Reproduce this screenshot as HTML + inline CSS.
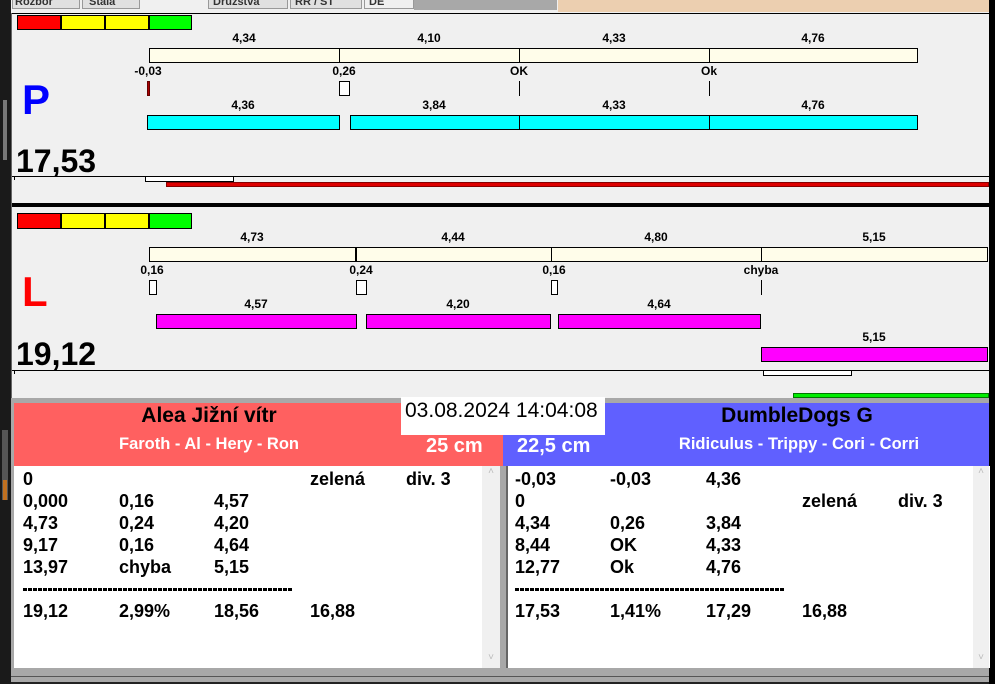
<!DOCTYPE html>
<html><head><meta charset="utf-8"><style>
*{margin:0;padding:0;box-sizing:border-box}
body{width:995px;height:684px;position:relative;overflow:hidden;background:#f0f0f0;font-family:"Liberation Sans",Arial,sans-serif;font-weight:bold}
div{position:absolute}
.t{font-size:12px;color:#000;white-space:nowrap;transform:translateX(-50%)}
.b{border:1px solid #000}
.r{font-size:18px;color:#000;white-space:nowrap}
.d{height:3px;background:repeating-linear-gradient(90deg,#000 0 4px,transparent 4px 5px)}
</style></head><body>
<!-- left dark strip -->
<div style="left:0;top:0;width:11px;height:684px;background:#1a1a1a"></div>
<div style="left:3px;top:100px;width:4px;height:60px;background:#777"></div>
<div style="left:2px;top:430px;width:6px;height:70px;background:#555"></div>
<div style="left:3px;top:480px;width:4px;height:20px;background:#c07020"></div>
<!-- tabs -->
<div style="left:11px;top:0;width:984px;height:13px;background:#f0f0f0"></div>
<div style="left:12px;top:0;width:68px;height:9px;background:#e0e0e0;border:1px solid #999;border-top:none;font-size:11px;overflow:hidden;line-height:4px;padding-left:2px;color:#333">Rozbor</div>
<div style="left:82px;top:0;width:58px;height:9px;background:#e0e0e0;border:1px solid #999;border-top:none;font-size:11px;overflow:hidden;line-height:4px;padding-left:6px;color:#333">Stala</div>
<div style="left:208px;top:0;width:80px;height:9px;background:#e0e0e0;border:1px solid #999;border-top:none;font-size:11px;overflow:hidden;line-height:4px;padding-left:4px;color:#333">Družstva</div>
<div style="left:290px;top:0;width:72px;height:9px;background:#e0e0e0;border:1px solid #999;border-top:none;font-size:11px;overflow:hidden;line-height:4px;padding-left:4px;color:#333">RR / ST</div>
<div style="left:364px;top:0;width:50px;height:9px;background:#f0f0f0;border:1px solid #999;border-top:none;font-size:11px;overflow:hidden;line-height:4px;padding-left:4px;color:#333">DE</div>
<div style="left:414px;top:0;width:143px;height:10px;background:#a8a8a8"></div>
<div style="left:558px;top:0;width:432px;height:12px;background:#eccfb0"></div>
<div style="left:989px;top:0;width:6px;height:684px;background:#000"></div>
<div style="left:11px;top:13px;width:978px;height:1px;background:#000"></div>
<div style="left:11px;top:13px;width:1px;height:390px;background:#666"></div>

<!-- Panel P -->
<div style="left:17px;top:15px;width:44px;height:15px;background:#f00" class="b"></div>
<div style="left:61px;top:15px;width:44px;height:15px;background:#ff0" class="b"></div>
<div style="left:105px;top:15px;width:44px;height:15px;background:#ff0" class="b"></div>
<div style="left:149px;top:15px;width:43px;height:15px;background:#0f0" class="b"></div>

<div class="t" style="left:244px;top:31px">4,34</div>
<div class="t" style="left:429px;top:31px">4,10</div>
<div class="t" style="left:614px;top:31px">4,33</div>
<div class="t" style="left:813px;top:31px">4,76</div>
<div class="b" style="left:149px;top:48px;width:769px;height:15px;background:#fffdea"></div>
<div style="left:339px;top:48px;width:1px;height:15px;background:#000"></div>
<div style="left:519px;top:48px;width:1px;height:15px;background:#000"></div>
<div style="left:709px;top:48px;width:1px;height:15px;background:#000"></div>
<div class="t" style="left:148px;top:64px">-0,03</div>
<div class="t" style="left:344px;top:64px">0,26</div>
<div class="t" style="left:519px;top:64px">OK</div>
<div class="t" style="left:709px;top:64px">Ok</div>
<div style="left:147px;top:81px;width:3px;height:15px;background:#a00;border:1px solid #600"></div>
<div class="b" style="left:339px;top:81px;width:11px;height:15px;background:#fff"></div>
<div style="left:519px;top:81px;width:1px;height:15px;background:#000"></div>
<div style="left:709px;top:81px;width:1px;height:15px;background:#000"></div>
<div style="left:22px;top:76px;font-size:42px;color:#00f;line-height:48px">P</div>
<div class="t" style="left:243px;top:98px">4,36</div>
<div class="t" style="left:434px;top:98px">3,84</div>
<div class="t" style="left:614px;top:98px">4,33</div>
<div class="t" style="left:813px;top:98px">4,76</div>
<div class="b" style="left:147px;top:115px;width:193px;height:15px;background:#0ff"></div>
<div class="b" style="left:350px;top:115px;width:568px;height:15px;background:#0ff"></div>
<div style="left:519px;top:115px;width:1px;height:15px;background:#000"></div>
<div style="left:709px;top:115px;width:1px;height:15px;background:#000"></div>
<div style="left:16px;top:143px;font-size:32px;line-height:36px;color:#000">17,53</div>
<div style="left:12px;top:176px;width:977px;height:1px;background:#000"></div>
<div style="left:14px;top:176px;width:1px;height:4px;background:#000"></div>
<div class="b" style="left:145px;top:176px;width:89px;height:6px;background:#fff"></div>
<div style="left:166px;top:182px;width:823px;height:5px;background:#d00;border:1px solid #800"></div>
<div style="left:12px;top:203px;width:977px;height:4px;background:#000"></div>

<!-- Panel L -->
<div style="left:17px;top:213px;width:44px;height:16px;background:#f00" class="b"></div>
<div style="left:61px;top:213px;width:44px;height:16px;background:#ff0" class="b"></div>
<div style="left:105px;top:213px;width:44px;height:16px;background:#ff0" class="b"></div>
<div style="left:149px;top:213px;width:43px;height:16px;background:#0f0" class="b"></div>
<div class="t" style="left:252px;top:230px">4,73</div>
<div class="t" style="left:453px;top:230px">4,44</div>
<div class="t" style="left:656px;top:230px">4,80</div>
<div class="t" style="left:874px;top:230px">5,15</div>
<div class="b" style="left:149px;top:247px;width:839px;height:15px;background:#fffdea"></div>
<div style="left:355px;top:247px;width:2px;height:15px;background:#000"></div>
<div style="left:551px;top:247px;width:1px;height:15px;background:#000"></div>
<div style="left:761px;top:247px;width:1px;height:15px;background:#000"></div>
<div class="t" style="left:152px;top:263px">0,16</div>
<div class="t" style="left:361px;top:263px">0,24</div>
<div class="t" style="left:554px;top:263px">0,16</div>
<div class="t" style="left:761px;top:263px">chyba</div>
<div class="b" style="left:149px;top:280px;width:8px;height:15px;background:#fff"></div>
<div class="b" style="left:356px;top:280px;width:11px;height:15px;background:#fff"></div>
<div class="b" style="left:551px;top:280px;width:7px;height:15px;background:#fff"></div>
<div style="left:761px;top:280px;width:1px;height:15px;background:#000"></div>
<div style="left:22px;top:268px;font-size:42px;color:#f00;line-height:48px">L</div>
<div class="t" style="left:256px;top:297px">4,57</div>
<div class="t" style="left:458px;top:297px">4,20</div>
<div class="t" style="left:659px;top:297px">4,64</div>
<div class="b" style="left:156px;top:314px;width:201px;height:15px;background:#f0f"></div>
<div class="b" style="left:366px;top:314px;width:185px;height:15px;background:#f0f"></div>
<div class="b" style="left:558px;top:314px;width:203px;height:15px;background:#f0f"></div>
<div class="t" style="left:874px;top:330px">5,15</div>
<div class="b" style="left:761px;top:347px;width:227px;height:15px;background:#f0f"></div>
<div style="left:16px;top:336px;font-size:32px;line-height:36px;color:#000">19,12</div>
<div style="left:12px;top:370px;width:977px;height:1px;background:#000"></div>
<div style="left:14px;top:370px;width:1px;height:4px;background:#000"></div>
<div class="b" style="left:763px;top:370px;width:89px;height:6px;background:#fff"></div>
<div style="left:793px;top:393px;width:196px;height:5px;background:#0e0;border:1px solid #070"></div>
<div style="left:11px;top:398px;width:978px;height:6px;background:#a8a8a8"></div>

<!-- bottom -->
<div style="left:11px;top:403px;width:978px;height:281px;background:#a8a8a8"></div>
<div style="left:14px;top:403px;width:489px;height:63px;background:#ff6060"></div>
<div style="left:503px;top:403px;width:486px;height:63px;background:#6060ff"></div>
<div style="left:209px;top:404px;font-size:21px;color:#000;transform:translateX(-50%);white-space:nowrap">Alea Jižní vítr</div>
<div style="left:209px;top:435px;font-size:16.5px;color:#fff;transform:translateX(-50%);white-space:nowrap">Faroth - Al - Hery - Ron</div>
<div style="left:426px;top:435px;font-size:20px;color:#fff">25 cm</div>
<div style="left:517px;top:435px;font-size:20px;color:#fff">22,5 cm</div>
<div style="left:797px;top:404px;font-size:21px;color:#000;transform:translateX(-50%);white-space:nowrap">DumbleDogs G</div>
<div style="left:799px;top:435px;font-size:16.5px;color:#fff;transform:translateX(-50%);white-space:nowrap">Ridiculus - Trippy - Cori - Corri</div>
<div style="left:401px;top:397px;width:204px;height:38px;background:#fff;font-size:21px;font-weight:normal;padding:2px 0 0 4px;color:#000;white-space:nowrap;overflow:hidden">03.08.2024 14:04:08</div>

<div style="left:14px;top:466px;width:486px;height:202px;background:#fff"></div>
<div style="left:482px;top:466px;width:18px;height:202px;background:#f0f0f0;font-size:10px;color:#bbb;text-align:center;font-weight:normal">˄</div>
<div style="left:482px;top:652px;width:18px;height:14px;font-size:10px;color:#bbb;text-align:center;font-weight:normal">˅</div>
<div style="left:508px;top:466px;width:482px;height:202px;background:#fff"></div>
<div style="left:506px;top:466px;width:2px;height:202px;background:#666"></div>
<div style="left:973px;top:466px;width:16px;height:202px;background:#f0f0f0;font-size:10px;color:#bbb;text-align:center;font-weight:normal">˄</div>
<div style="left:973px;top:652px;width:16px;height:14px;font-size:10px;color:#bbb;text-align:center;font-weight:normal">˅</div>
<div style="left:11px;top:676px;width:978px;height:1px;background:#555"></div>
<div style="left:11px;top:682px;width:978px;height:2px;background:#222"></div>

<!-- left table -->
<div class="r" style="left:23px;top:469px">0</div><div class="r" style="left:310px;top:469px">zelená</div><div class="r" style="left:406px;top:469px">div. 3</div>
<div class="r" style="left:23px;top:491px">0,000</div><div class="r" style="left:119px;top:491px">0,16</div><div class="r" style="left:214px;top:491px">4,57</div>
<div class="r" style="left:23px;top:513px">4,73</div><div class="r" style="left:119px;top:513px">0,24</div><div class="r" style="left:214px;top:513px">4,20</div>
<div class="r" style="left:23px;top:535px">9,17</div><div class="r" style="left:119px;top:535px">0,16</div><div class="r" style="left:214px;top:535px">4,64</div>
<div class="r" style="left:23px;top:557px">13,97</div><div class="r" style="left:119px;top:557px">chyba</div><div class="r" style="left:214px;top:557px">5,15</div>
<div class="d" style="left:23px;top:588px;width:270px"></div>
<div class="r" style="left:23px;top:601px">19,12</div><div class="r" style="left:119px;top:601px">2,99%</div><div class="r" style="left:214px;top:601px">18,56</div><div class="r" style="left:310px;top:601px">16,88</div>

<!-- right table -->
<div class="r" style="left:515px;top:469px">-0,03</div><div class="r" style="left:610px;top:469px">-0,03</div><div class="r" style="left:706px;top:469px">4,36</div>
<div class="r" style="left:515px;top:491px">0</div><div class="r" style="left:802px;top:491px">zelená</div><div class="r" style="left:898px;top:491px">div. 3</div>
<div class="r" style="left:515px;top:513px">4,34</div><div class="r" style="left:610px;top:513px">0,26</div><div class="r" style="left:706px;top:513px">3,84</div>
<div class="r" style="left:515px;top:535px">8,44</div><div class="r" style="left:610px;top:535px">OK</div><div class="r" style="left:706px;top:535px">4,33</div>
<div class="r" style="left:515px;top:557px">12,77</div><div class="r" style="left:610px;top:557px">Ok</div><div class="r" style="left:706px;top:557px">4,76</div>
<div class="d" style="left:515px;top:588px;width:270px"></div>
<div class="r" style="left:515px;top:601px">17,53</div><div class="r" style="left:610px;top:601px">1,41%</div><div class="r" style="left:706px;top:601px">17,29</div><div class="r" style="left:802px;top:601px">16,88</div>
</body></html>
